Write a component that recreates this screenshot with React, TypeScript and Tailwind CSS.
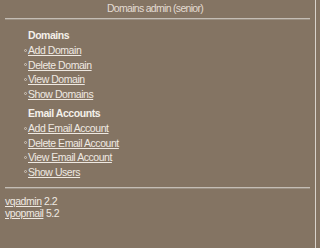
import React from "react";

const domainLinks = ["Add Domain", "Delete Domain", "View Domain", "Show Domains"];
const emailLinks = ["Add Email Account", "Delete Email Account", "View Email Account", "Show Users"];

function LinkItem({ label }: { label: string }) {
  return (
    <li className="flex items-center h-[14.5px]">
      <span className="w-[3px] h-[3px] rounded-full border border-[#cfc6bb] mr-[1px] ml-[-4px]" />
      <a href="#" className="underline text-[#efe9e2] decoration-[#efe9e2] underline-offset-[1px]">
        {label}
      </a>
    </li>
  );
}

function Rule() {
  return <div className="h-[2px] mx-[5px] bg-[#c4bdb5] border-b border-[#9a8f82]" />;
}

export default function App() {
  return (
    <div
      className="w-[320px] h-[248px] bg-[#847463] text-[#efe9e2] text-[10.5px] leading-[12px] tracking-[-0.45px] flex"
      style={{ fontFamily: '"Liberation Sans", Arial, sans-serif' }}
    >
      <div className="w-[315px] flex flex-col">
        <div className="text-center pt-[2px] h-[18px] pr-[5px] text-[10.5px] leading-[12px] tracking-[-0.7px] text-[#e3dbd2]">
          Domains admin (senior)
        </div>
        <Rule />
        <div className="pl-[28px] pt-[9px]">
          <div className="font-bold text-[#f4f0ea] h-[14px]">Domains</div>
          <ul>
            {domainLinks.map((l) => (
              <LinkItem key={l} label={l} />
            ))}
          </ul>
          <div className="font-bold text-[#f4f0ea] h-[14px] mt-[6px]">Email Accounts</div>
          <ul>
            {emailLinks.map((l) => (
              <LinkItem key={l} label={l} />
            ))}
          </ul>
        </div>
        <div className="mt-[8px]">
          <Rule />
        </div>
        <div className="pl-[5px] pt-[7px] leading-[11.5px]">
          <div>
            <a href="#" className="underline">vqadmin</a> 2.2
          </div>
          <div>
            <a href="#" className="underline">vpopmail</a> 5.2
          </div>
        </div>
      </div>
      <div className="w-[1px] bg-[#d8d2cb]" />
      <div className="flex-1 bg-[#847463]" />
    </div>
  );
}
